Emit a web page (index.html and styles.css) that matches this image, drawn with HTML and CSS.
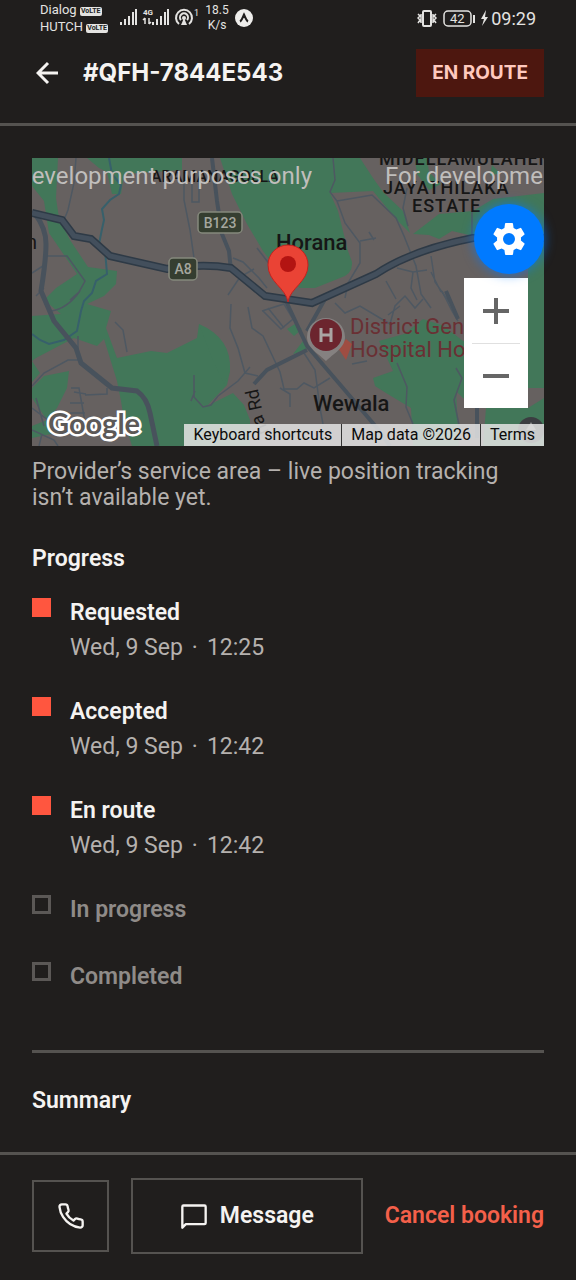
FILE: index.html
```html
<!DOCTYPE html>
<html lang="en">
  <head>
    <meta charset="utf-8" />
    <meta name="viewport" content="width=device-width, initial-scale=1" />
    <title>Booking #QFH-7844E543</title>
    <link rel="stylesheet" href="styles.css">
  </head>
  <body>
    <div class="status-bar">
      <div class="carriers">
        <div>Dialog <span class="volte">VoLTE</span></div>
        <div>HUTCH <span class="volte">VoLTE</span></div>
      </div>
      <svg class="signal" width="78" height="22" viewBox="0 0 78 22" fill="#e4e3e1">
        <path d="M0 15h2v3H0zM4 12h2v6H4zM8 9h2v9H8zM12 5h2v13h-2zM15 2h2v16h-2z" />
        <path d="M32 15h2v3h-2zM36 12h2v6h-2zM40 9h2v9h-2zM44 5h2v13h-2zM47 2h2v16h-2z" />
        <path d="M25 11v6M23 13l2-2M29 11v6M31 15l-2 2" stroke="#e4e3e1" stroke-width="1.5" />
        <text x="23" y="8" font-size="8" font-weight="700">4G</text>
        <g fill="none" stroke="#e4e3e1" stroke-width="2">
          <path d="M59 17a8 8 0 1 1 10 0" />
          <path d="M61 13a4 4 0 1 1 6 0" />
        </g>
        <circle cx="64" cy="11" r="2" />
        <path d="M64 11l3 7h-6z" />
        <text x="74" y="9" font-size="9">1</text>
      </svg>
      <div class="speed">18.5<br />K/s</div>
      <svg width="18" height="18" viewBox="0 0 18 18">
        <circle cx="9" cy="9" r="9" fill="#eeedeb" />
        <path d="M5 12.500c2-1 3-5 4-7 1 2 2 6 4 7" fill="none" stroke="#201e1d" stroke-width="2" />
      </svg>
      <svg class="battery" width="72" height="20" viewBox="0 0 72 20" fill="none" stroke="#e4e3e1">
        <rect x="6" y="3" width="8" height="15" rx="1" stroke-width="2" />
        <path d="M1 6l2 2-2 2 2 2-2 3M4 6v9M19 6l-2 2 2 2-2 2 2 3M16 6v9" stroke-width="1.500" />
        <rect x="27" y="3" width="27" height="15" rx="4" stroke-width="1.500" />
        <path d="M57 7v8" stroke-width="2" />
        <path d="M69 2l-5 9h3l-2 7 6-9h-3z" fill="#e4e3e1" stroke="none" />
        <text x="33" y="15" font-size="13" fill="#e4e3e1" stroke="none">42</text>
      </svg>
      <div class="clock">09:29</div>
    </div>

    <header class="header">
      <button class="back" aria-label="Back">
        <svg width="24" height="24" viewBox="0 0 24 24">
          <path d="M22 12H2M12 2L2 12l10 10" />
        </svg>
      </button>
      <h1>#QFH-7844E543</h1>
      <span class="badge">EN ROUTE</span>
    </header>

    <main class="content">
      <div class="map">
        <svg class="map-canvas" viewBox="0 0 512 288" preserveAspectRatio="xMidYMid slice">
          <rect width="512" height="288" fill="#666160" />
          <!-- parks and fields -->
          <g fill="#427759">
            <path d="M0 0H26L24 40 27 60 38 82 56 109 85 113 84 126 72 138 55 146 79 153 74 170 85 200 119 193 135 195 165 180 167 166 180 176 192 194 198 213 195 227 175 248 201 235 212 247 218 262V288H100L92 262 89 243 85 223 72 181 65 188 42 180 4 200 0 203V158L29 156 12 142 24 130 45 116 17 75 12 43 0 28z" />
            <path d="M167 166Q200 180 198 213L192 226 180 200z" />
            <path d="M0 203L8 215 0 224zM0 230L12 218 37 213 35 230 25 250 15 262 0 240zM0 268l15-6 4 14-19 4z" />
            <path d="M55 0L67 10 75 14 80 36 89 36 92 16 150 12V0z" />
            <path d="M188 0L200 36 215 66 231 93 250 118 268 130 283 130 308 120Q321 116 320 104L316 93 306 53 298 35 341 33 364 61 378 75 371 53 351 34 341 20 328 0z" />
            <path d="M383 0h12l2 14 12 12-12 6-12-16zM460 7l8 8-10 3z" />
            <path d="M381 76L407 56 441 53 461 41 512 35V230H496V78H441L420 73 407 81 397 77z" />
            <path d="M341 220L361 213 347 183 372 176 391 161 412 168 431 183 496 175V250L512 240V288H451L454 250 431 240 424 233 427 288H381L379 250 354 235 343 228z" />
            <path d="M255 171l8-5 7 5-8 7zM261 196l10-13 4 9z" />
          </g>
          <!-- water and lanes -->
          <g class="lanes">
            <path class="river" d="M77 0L80 16 89 27 87 36 78 42 70 51 72 62 70 71 67 86 73 92 75 116 64 123 60 135 52 143 49 153 45 173 32 182 17 186 8 182 0 176" />
            <path d="M44 0L42 25 36 52 32 62" stroke-width="3" />
            <path d="M14 98H35L53 123 47 134 38 142M0 115L14 106M19 153Q35 151 48 133M0 228L12 215 36 202H46V178" />
            <path d="M83 164l8 8 4 22M39 230h8l6 34M42 234l12 2M38 245h14M38 255h15M75 230v6l-22 1M0 250l20 15M4 240l8 28" />
            <path d="M152 14V42L158 72 162 100M160 16v28h7V14M201 100l10 4 16 16 8 10M225 90l17 22M196 137l12-18 14-8" />
            <path d="M162 217v22l9 10 8-2 7-9 20-15 12-14M163 233l-4 10" />
            <path d="M301 0L303 22 298 34 305 43 313 65 328 85V105L316 125 313 140M305 43l35-6 24 23 8 18 12 30 5 28 10 14M328 83l16-3M337 74l5 8" />
            <path d="M376 68l-5-18 4-20M365 110l16 4 14-2M381 114l-2 16 6 12M399 98l4 26 14 20M440 53v25M354 123l10 18M399 114l10 20" />
            <path d="M199 146L198 170 206 190 213 215 226 218M216 149L220 170 231 178 248 214 252 231H265L272 225 282 230 298 220M248 230l10 6v13M230 153l22-7 9 15-12 10-18-18M236 150l16 20" />
            <path d="M272 195l11 17 5 38 3 16M303 145l10 10 15-7 20 12 10 6 5-18 10-10 10 12 8-9M368 148l-12 9M365 205l10 24-1 20 7 17M410 133l10 20 6 10M424 210l6 10-8 22 5 25M320 206l15-3" />
            <path d="M0 272l22 10 4 6M10 276l-3 12M4 138l8-8" />
          </g>
          <g class="roads">
            <path d="M3 56Q14 70 14 86T9 133L22 163 44 190 49 205 80 230 105 233Q115 240 118 255L125 288" stroke-width="5" stroke="#4e5055" />
            <path d="M180 0L185 43 190 76 197 93 199 113M254 143L275 188 311 230 345 270 358 288M293 141L275 173M275 192L235 212 222 226M414 133l12 28M445 230v50" stroke-width="4" />
            <path class="edge" d="M0 55L30 62 42 78 59 81 78 98 135 111Q170 105 199 110L233 138 280 145 344 116Q380 92 441 80H512" />
            <path class="main" d="M0 55L30 62 42 78 59 81 78 98 135 111Q170 105 199 110L233 138 280 145 344 116Q380 92 441 80H512" />
          </g>
          <path d="M306 190l8-9 6 5-6 16z" fill="#9f4d42" />
          <!-- road shields -->
          <g class="shields">
            <rect x="166" y="54" width="44" height="21" rx="4" />
            <rect x="137" y="100" width="28" height="22" rx="4" />
            <text x="188" y="70">B123</text>
            <text x="151" y="116">A8</text>
          </g>
          <!-- place names -->
          <g class="places">
            <text class="estate" x="119" y="24">ARAMANAGOLLA</text>
            <text class="area" x="347" y="7">MIDELLAMULAHENA</text>
            <text class="area" x="351" y="36">JAYATHILAKA</text>
            <text class="area" x="380" y="54">ESTATE</text>
            <text class="town" x="244" y="92">Horana</text>
            <text class="town" x="281" y="253">Wewala</text>
            <text x="-6" y="91" font-size="20">n</text>
            <text transform="translate(230 251) rotate(-102)" font-size="18">Rd</text>
            <text transform="translate(237 274) rotate(-112)" font-size="18">na</text>
            <text class="hospital" x="318" y="176">District General</text>
            <text class="hospital" x="318" y="199">Hospital Horana</text>
          </g>
          <path d="M294 160a19 19 0 0 1 19 19c0 11-12 17-19 24-7-7-19-13-19-24a19 19 0 0 1 19-19z" fill="#858180" />
          <circle cx="294" cy="177" r="16" fill="#6c252e" />
          <path d="M289 170v14M299 170v14M289 177h10" stroke="#aaa5a3" stroke-width="3" />
          <circle cx="499" cy="272" r="13" fill="#3b3d41" />
          <path d="M499 264l5 8h-10z" fill="#8b8b8b" />
          <path d="M256 144c-2-14-20-20-20-37a20 20 0 0 1 40 0c0 17-18 23-20 37z" fill="#ea4335" stroke="#c5221f" />
          <circle cx="256" cy="106" r="8" fill="#b31412" />
          <g class="watermark">
            <text x="280" y="26" text-anchor="end">For development purposes only</text>
            <text x="353" y="26">For development purposes only</text>
          </g>
          <text class="google" x="16" y="276">Google</text>
        </svg>
        <div class="map-zoom">
          <button aria-label="Zoom in"><svg width="26" height="26"><path d="M0 13h26M13 0v26" /></svg></button>
          <button aria-label="Zoom out"><svg width="26" height="26"><path d="M0 13h26" /></svg></button>
        </div>
        <button class="map-settings" aria-label="Map settings">
          <svg width="40" height="40" viewBox="0 0 24 24">
            <path d="M19.140 12.940c.040-.3.060-.610.060-.940s-.020-.640-.070-.940l2.030-1.580a.49.49 0 0 0 .12-.61l-1.920-3.320a.49.49 0 0 0-.59-.22l-2.390.96a7 7 0 0 0-1.620-.94l-.36-2.540a.48.48 0 0 0-.48-.41h-3.840a.47.47 0 0 0-.47.41l-.36 2.540a7.200 7.200 0 0 0-1.620.94l-2.390-.96a.48.48 0 0 0-.59.22L2.740 8.870a.48.48 0 0 0 .12.61l2.030 1.580a6.500 6.500 0 0 0 0 1.880l-2.030 1.580a.49.49 0 0 0-.12.61l1.920 3.320c.12.22.37.29.59.22l2.390-.96c.5.380 1.030.7 1.620.94l.36 2.540c.05.24.24.41.48.41h3.840c.24 0 .44-.17.47-.41l.36-2.540a7 7 0 0 0 1.620-.94l2.390.96c.22.08.47 0 .59-.22l1.920-3.320a.48.48 0 0 0-.12-.61zM12 15.600a3.600 3.600 0 1 1 0-7.200 3.600 3.600 0 0 1 0 7.200z" />
          </svg>
        </button>
        <div class="map-legal">
          <button>Keyboard shortcuts</button>
          <span>Map data ©2026</span>
          <a href="#">Terms</a>
        </div>
      </div>
      <p class="caption">Provider’s service area – live position tracking isn’t available yet.</p>

      <h2>Progress</h2>
      <ol class="steps">
        <li class="step done">
          <h3>Requested</h3>
          <p>Wed, 9 Sep<span class="dot">·</span>12:25</p>
        </li>
        <li class="step done">
          <h3>Accepted</h3>
          <p>Wed, 9 Sep<span class="dot">·</span>12:42</p>
        </li>
        <li class="step done">
          <h3>En route</h3>
          <p>Wed, 9 Sep<span class="dot">·</span>12:42</p>
        </li>
        <li class="step">
          <h3>In progress</h3>
        </li>
        <li class="step">
          <h3>Completed</h3>
        </li>
      </ol>

      <section class="summary">
        <h2>Summary</h2>
      </section>
    </main>

    <footer class="actions">
      <button class="call" aria-label="Call">
        <svg width="28" height="28" viewBox="0 0 24 24">
          <path d="M22 16.920v3a2 2 0 0 1-2.180 2 19.800 19.800 0 0 1-8.630-3.070 19.500 19.500 0 0 1-6-6A19.800 19.800 0 0 1 2.120 4.180 2 2 0 0 1 4.110 2h3a2 2 0 0 1 2 1.720c.13.96.36 1.900.7 2.810a2 2 0 0 1-.45 2.110L8.090 9.910a16 16 0 0 0 6 6l1.270-1.270a2 2 0 0 1 2.110-.45c.91.34 1.850.57 2.810.7A2 2 0 0 1 22 16.920z" />
        </svg>
      </button>
      <button class="message">
        <svg width="28" height="28" viewBox="0 0 24 24">
          <path d="M2 22V4a1 1 0 0 1 1-1h18a1 1 0 0 1 1 1v14a1 1 0 0 1-1 1H5z" />
        </svg>
        Message
      </button>
      <button class="cancel">Cancel booking</button>
    </footer>
  </body>
</html>
```

FILE: styles.css
```css
*,
*::before {
  box-sizing: border-box;
}
body {
  display: flex;
  flex-direction: column;
  min-height: 100vh;
  margin: 0;
  background: #201e1d;
  color: #f5f3f1;
  font-family: Roboto, "Liberation Sans", sans-serif;
  font-size: 23px;
  line-height: 26px;
}
button {
  padding: 0;
  border: 0;
  background: none;
  color: inherit;
  font: inherit;
  cursor: pointer;
}
h1, h2, h3, p, ol {
  margin: 0;
  padding: 0;
}
svg {
  display: block;
}

/* status bar */
.status-bar {
  display: flex;
  align-items: center;
  height: 36px;
  padding: 0 40px;
  color: #e4e3e1;
  font-size: 13px;
  line-height: 17px;
}
.carriers {
  width: 80px;
  white-space: nowrap;
}
.volte {
  display: inline-block;
  padding: 0 1px;
  border-radius: 2px;
  background: #e4e3e1;
  color: #201e1d;
  font-size: 7px;
  font-weight: 700;
  line-height: 9px;
  vertical-align: 1px;
}
.speed {
  width: 30px;
  margin: 0 3px 0 4px;
  font-size: 12px;
  line-height: 15px;
  text-align: center;
}
.battery {
  margin-left: auto;
}
.clock {
  margin-left: 2px;
  font-size: 18px;
}

/* header */
.header {
  display: flex;
  align-items: center;
  height: 90px;
  padding: 0 32px 13px 36px;
  border-bottom: 3px solid #555350;
}
.back path {
  fill: none;
  stroke: #f5f3f1;
  stroke-width: 3;
}
.header h1 {
  flex: 1;
  margin-left: 23px;
  font-family: Inter, sans-serif;
  font-size: 24px;
  font-weight: 700;
}
.badge {
  padding: 11px 16px;
  background: #4d170f;
  color: #ffc9be;
  font-family: Inter, sans-serif;
  font-size: 19px;
  font-weight: 700;
}

/* map */
.content {
  flex: 1;
  padding: 32px 32px 0;
}
.map {
  position: relative;
  height: 288px;
}
.map-canvas {
  width: 100%;
  height: 100%;
}
.lanes path {
  fill: none;
  stroke: #4e5862;
  stroke-width: 1.5;
}
.lanes .river {
  stroke: #37606b;
  stroke-width: 2;
}
.roads path {
  fill: none;
  stroke: #48525c;
}
.roads .edge {
  stroke: #2e3a46;
  stroke-width: 8;
}
.roads .main {
  stroke: #434f5c;
  stroke-width: 5;
}
.shields rect {
  fill: #353e30;
  stroke: #85897c;
  stroke-width: 1.5;
}
.shields text {
  fill: #a5a79f;
  font-size: 14px;
  font-weight: 500;
  text-anchor: middle;
}
.places {
  fill: #161616;
}
.places .area {
  font-size: 18px;
  font-weight: 500;
  letter-spacing: 1px;
}
.places .estate {
  font-size: 16px;
  font-weight: 500;
}
.places .town {
  font-size: 22px;
  font-weight: 500;
}
.places .hospital {
  fill: #6a3034;
  font-size: 22px;
}
.watermark {
  fill: #c0bebc;
  font-size: 24px;
}
.google {
  fill: #5c5957;
  stroke: #fff;
  stroke-width: 5;
  paint-order: stroke;
  font-family: Lato, sans-serif;
  font-size: 29px;
  font-weight: 700;
}
.map-zoom {
  position: absolute;
  top: 120px;
  right: 16px;
  width: 64px;
  padding: 0 8px;
  background: #fff;
}
.map-zoom button {
  display: flex;
  align-items: center;
  justify-content: center;
  width: 48px;
  height: 65px;
}
.map-zoom button + button {
  border-top: 1px solid #e0e0e0;
}
.map-zoom path {
  stroke: #666;
  stroke-width: 4;
}
.map-settings {
  position: absolute;
  top: 46px;
  right: 0;
  display: flex;
  align-items: center;
  justify-content: center;
  width: 70px;
  height: 70px;
  border-radius: 50%;
  background: #007aff;
  box-shadow: 0 0 12px rgba(0, 122, 255, 0.7);
}
.map-settings path {
  fill: #fff;
}
.map-legal {
  position: absolute;
  right: 0;
  bottom: 0;
  display: flex;
  color: #0b0b0b;
  font-size: 16px;
  line-height: 22px;
  white-space: nowrap;
}
.map-legal > * {
  padding: 0 9px;
  background: rgba(228, 228, 228, 0.85);
}
.map-legal > * + * {
  border-left: 1px solid #333;
}
.map-legal a {
  color: inherit;
  text-decoration: none;
}
.caption {
  margin-top: 13px;
  color: #b5b1ae;
}

/* progress */
h2, h3 {
  font-size: 23px;
  font-weight: 600;
}
.content h2 {
  margin-top: 35px;
}
.steps {
  margin-top: 26px;
  list-style: none;
}
.step {
  position: relative;
  padding: 0 0 37px 38px;
  color: #8f8b88;
}
.step::before {
  content: "";
  position: absolute;
  top: 0;
  left: 0;
  width: 19px;
  height: 19px;
  border: 3px solid #5b5856;
}
.step.done::before {
  border-color: #ff563f;
  background: #ff563f;
}
.step h3 {
  line-height: 30px;
}
.done h3 {
  color: #f5f3f1;
}
.step p {
  margin-top: 8px;
  color: #b5b1ae;
  line-height: 24px;
}
.dot {
  margin: 0 9px;
}
.summary {
  margin-top: 21px;
  padding-bottom: 35px;
  border-top: 3px solid #555350;
}

/* bottom actions */
.actions {
  display: flex;
  align-items: center;
  gap: 22px;
  height: 128px;
  padding: 0 32px 3px;
  border-top: 3px solid #555350;
  font-weight: 600;
}
.actions path {
  fill: none;
  stroke: #f5f3f1;
  stroke-width: 2;
  stroke-linejoin: round;
}
.call,
.message {
  display: flex;
  align-items: center;
  justify-content: center;
  gap: 12px;
  border: 2px solid #555350;
}
.call {
  width: 77px;
  height: 72px;
}
.message {
  flex: 1;
  height: 76px;
}
.cancel {
  color: #f4604a;
}
```
